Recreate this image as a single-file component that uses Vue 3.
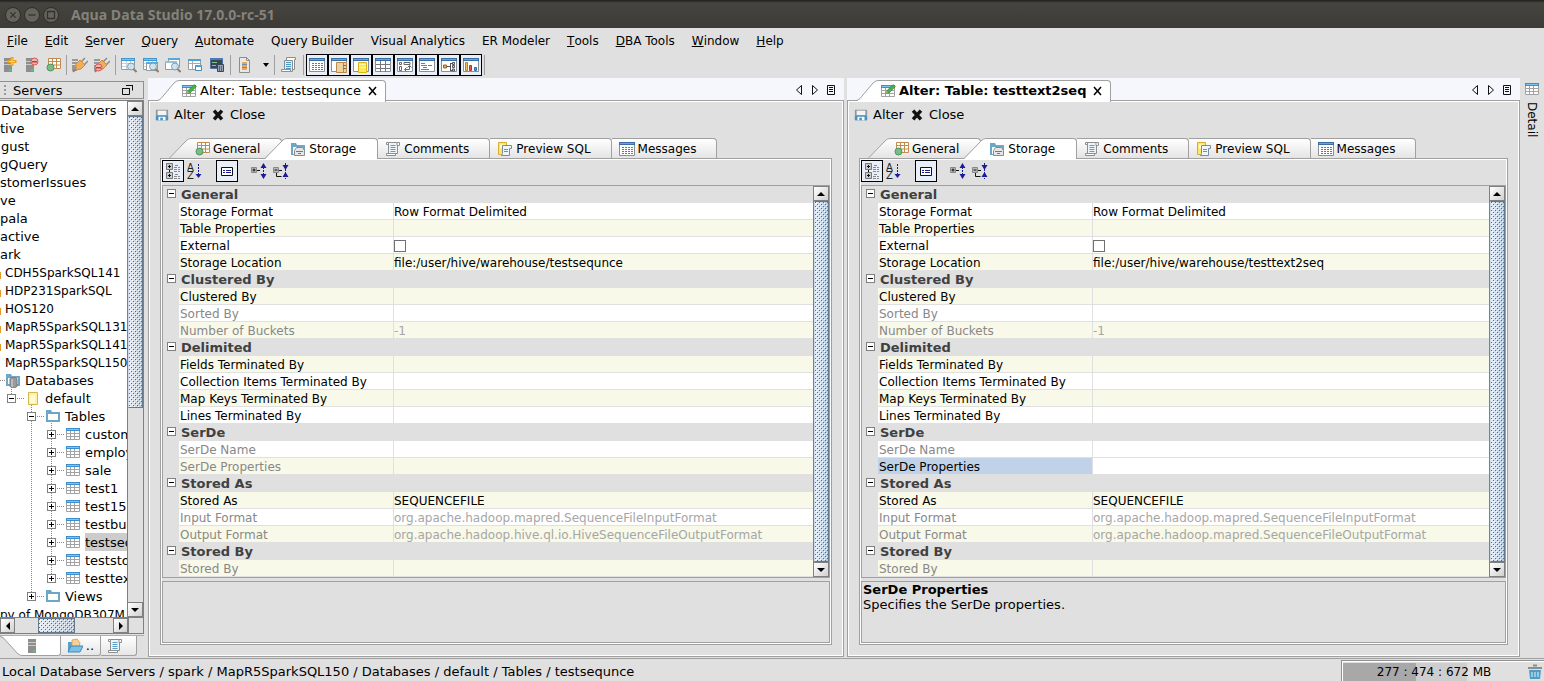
<script setup>
import { ref } from 'vue'

const menus = [
  ['F', 'ile'], ['E', 'dit'], ['S', 'erver'], ['Q', 'uery'], ['A', 'utomate'],
  ['', 'Query Builder'], ['', 'Visual Analytics'], ['', 'ER Modeler'],
  ['T', 'ools'], ['D', 'BA Tools'], ['W', 'indow'], ['H', 'elp']
]

const toolGroups = [
  ['server-add', 'server-remove', 'schema'],
  ['plug', 'plug-off'],
  ['win-search', 'win-search2', 'win-search3', 'win-copy', 'terminal']
]
const viewTools = ['v-text', 'v-form', 'v-db', 'v-grid', 'v-pivot', 'v-list', 'v-tree', 'v-chart']

const tree = [
  { t: 'Database Servers', x: 1 },
  { t: 'tive', x: 0 },
  { t: 'gust', x: 1 },
  { t: 'gQuery', x: 0 },
  { t: 'stomerIssues', x: 0 },
  { t: 've', x: 0 },
  { t: 'pala', x: 0 },
  { t: 'active', x: 0 },
  { t: 'ark', x: 0 },
  { t: 'CDH5SparkSQL141', x: 5, server: true, mark: true },
  { t: 'HDP231SparkSQL', x: 5, server: true, mark: true },
  { t: 'HOS120', x: 5, server: true, mark: true },
  { t: 'MapR5SparkSQL131', x: 5, server: true, mark: true },
  { t: 'MapR5SparkSQL141', x: 5, server: true, mark: true },
  { t: 'MapR5SparkSQL150', x: 5, server: true },
  { t: 'Databases', x: 25, icon: 'folder-db', from: 0, lines: [[11, 16, 18]] },
  { t: 'default', x: 45, icon: 'db', box: 11, sign: '-', lines: [[11, 0, 5], [31, 16, 18]] },
  { t: 'Tables', x: 65, icon: 'folder', box: 31, sign: '-', lines: [[31, 0, 18], [51, 16, 18]] },
  ...['customers', 'employee', 'sale', 'test1', 'test15', 'testbucket', 'testsequnce', 'teststore', 'testtext2seq'].map((t, i) => ({
    t, x: 85, icon: 'table', box: 51, sign: '+', selected: i === 6, lines: [[31, 0, 18], [51, 0, i === 8 ? 9 : 18]]
  })),
  { t: 'Views', x: 65, icon: 'folder', box: 31, sign: '+', lines: [[31, 0, 9]] },
  { t: 'py of MongoDB307M', x: 0, server: true }
]

const sections = (location, outputFormat) => [
  { title: 'General', rows: [
    { n: 'Storage Format', v: 'Row Format Delimited' },
    { n: 'Table Properties' },
    { n: 'External', check: true },
    { n: 'Storage Location', v: location }
  ] },
  { title: 'Clustered By', rows: [
    { n: 'Clustered By' },
    { n: 'Sorted By', off: true },
    { n: 'Number of Buckets', v: '-1', off: true }
  ] },
  { title: 'Delimited', rows: [
    { n: 'Fields Terminated By' },
    { n: 'Collection Items Terminated By' },
    { n: 'Map Keys Terminated By' },
    { n: 'Lines Terminated By' }
  ] },
  { title: 'SerDe', rows: [
    { n: 'SerDe Name', off: true },
    { n: 'SerDe Properties', off: true }
  ] },
  { title: 'Stored As', rows: [
    { n: 'Stored As', v: 'SEQUENCEFILE' },
    { n: 'Input Format', v: 'org.apache.hadoop.mapred.SequenceFileInputFormat', off: true },
    { n: 'Output Format', v: outputFormat, off: true }
  ] },
  { title: 'Stored By', rows: [{ n: 'Stored By', off: true }] }
]

const flatten = (list) => {
  const out = []
  list.forEach((s) => {
    out.push({ head: s.title })
    s.rows.forEach((r) => out.push({ ...r, even: out.length % 2 === 0 }))
  })
  return out
}

const panes = ref([
  {
    id: 'a', title: 'Alter: Table: testsequnce', bold: false, selected: '', help: '',
    rows: flatten(sections('file:/user/hive/warehouse/testsequnce', 'org.apache.hadoop.hive.ql.io.HiveSequenceFileOutputFormat'))
  },
  {
    id: 'b', title: 'Alter: Table: testtext2seq', bold: true, selected: 'SerDe Properties', help: 'Specifies the SerDe properties.',
    rows: flatten(sections('file:/user/hive/warehouse/testtext2seq', 'org.apache.hadoop.mapred.SequenceFileOutputFormat'))
  }
])

const innerTabs = [
  { t: 'General', icon: 'schema', slant: true },
  { t: 'Storage', icon: 'folder-disk', slant: true, active: true },
  { t: 'Comments', icon: 'scroll' },
  { t: 'Preview SQL', icon: 'preview' },
  { t: 'Messages', icon: 'v-text' }
]
const memory = { used: 277, allocated: 474, max: 672 }
</script>

<template>
  <div class="app">
    <svg class="sprite" aria-hidden="true">
      <defs>
        <symbol id="server" viewBox="0 0 16 16"><path d="M3 1h8v3H3zM3 5h8v2H3zM3 8h8v7H3z" fill="#8e8e8e" /><path d="M3 4h8v1H3zM3 7h8v1H3z" fill="#c9c9c9" /><path d="M8 12h2v2H8z" fill="#4fd06a" /></symbol>
        <symbol id="server-add" viewBox="0 0 16 16"><use href="#server" /><path d="M9.500 0h3v3h3v3h-3v3h-3V6h-3V3h3z" fill="#f0a020" /><path d="M10.500 1.500h1v6h-1zM8 4h6v1H8z" fill="#ffd84a" /></symbol>
        <symbol id="server-remove" viewBox="0 0 16 16"><use href="#server" /><circle cx="11.500" cy="4.500" r="3.500" fill="#f3b5b0" stroke="#d8574f" /><path d="M9 4h5v1.500H9z" fill="#c23a34" /></symbol>
        <symbol id="schema" viewBox="0 0 16 16"><path d="M3.500 1.500h12v10h-12zM3.500 4.500h12M3.500 8h12M7.500 1v10M11.500 1v10" fill="#fff" stroke="#c28a4e" /><circle cx="5.500" cy="10.500" r="3.500" fill="#7dbb84" stroke="#4c9460" /></symbol>
        <symbol id="plug" viewBox="0 0 16 16"><path d="M0 2h6v2H0zM0 5h6v2H0zM0 8h5v6H0z" fill="#999" /><path d="M1 15l3-3" stroke="#777" stroke-width="1.500" /><path d="M4 7l4-4 5 5-4 4-5 1z" fill="#f0ae5c" stroke="#d98a2e" /><path d="M9.500 4.500L13 1M12.500 7.500L16 4" stroke="#8a8a8a" stroke-width="1.500" /></symbol>
        <symbol id="plug-off" viewBox="0 0 16 16"><use href="#plug" /><circle cx="4.500" cy="10.500" r="3.500" fill="#f3b5b0" stroke="#d8574f" /><path d="M2 10h5v1.500H2z" fill="#c23a34" /></symbol>
        <symbol id="win" viewBox="0 0 16 16"><path d="M.5 1.500h13v11H.5z" fill="#fff" stroke="#9a9a9a" /><path d="M0 1h14v3H0z" fill="#3f97cf" /><path d="M1 2.500h12" stroke="#7fc4ee" /><path d="M1 6.500h12M1 9.500h12M5.500 4v8M9.500 4v8" stroke="#c5d3dc" /></symbol>
        <symbol id="lens" viewBox="0 0 16 16"><circle cx="10" cy="9.500" r="3.500" fill="#c5e2f3" fill-opacity=".9" stroke="#8c9aa2" /><path d="M12.500 12l3 3" stroke="#8c8073" stroke-width="2" /></symbol>
        <symbol id="win-search" viewBox="0 0 16 16"><use href="#win" /><use href="#lens" /></symbol>
        <symbol id="win-search2" viewBox="0 0 16 16"><use href="#win" /><path d="M3.500 5.500h11v8h-11z" fill="#fff" stroke="#999" /><path d="M3 5h12v2H3z" fill="#58aadc" /><use href="#lens" /></symbol>
        <symbol id="win-search3" viewBox="0 0 16 16"><path d="M3.500 1.500h11v9h-11z" fill="#fff" stroke="#999" /><path d="M3 1h12v2H3z" fill="#58aadc" /><path d="M.5 4.500h11v8H.5z" fill="#fff" stroke="#999" /><path d="M0 4h12v2H0z" fill="#9bbfd4" /><use href="#lens" /></symbol>
        <symbol id="win-copy" viewBox="0 0 16 16"><path d="M1.500 2.500h12v10h-12z" fill="#fff" stroke="#999" /><path d="M1 2h13v2H1z" fill="#4ba3d8" /><path d="M2 6.500h11M5.500 4v8" stroke="#aaa" /><path d="M8.500 8.500h6v5h-6z" fill="#fff" stroke="#4b86ac" /><path d="M8 8h7v2H8z" fill="#4ba3d8" /></symbol>
        <symbol id="terminal" viewBox="0 0 16 16"><path d="M1.500 1.500h12v10h-12z" fill="#3b4652" stroke="#5273a8" /><path d="M1 1h13v2H1z" fill="#4c7cb8" /><path d="M3 5.500h5M3 8.500h4" stroke="#7fc48a" /><path d="M8.500 7.500h6v7h-6z" fill="#98a1b3" stroke="#3c4560" /><path d="M10.500 9v5M12.500 9v5" stroke="#5a6480" /></symbol>
        <symbol id="doc" viewBox="0 0 16 16"><path d="M3.500.5h7l3 3v12h-10z" fill="#e8e8e8" stroke="#8d8d8d" /><path d="M10.500.5v3h3" fill="none" stroke="#8d8d8d" /><path d="M6 5h5v8H6z" fill="#e5a95a" /><path d="M6 7.500h5M6 10.500h5" stroke="#6d8fad" /></symbol>
        <symbol id="scroll" viewBox="0 0 16 16"><path d="M3.500 1.500h9v11h-9z" fill="#eef4f8" stroke="#8b8f92" /><path d="M1.500 12.500h9v2h-9zM12 1.500h2.500v3H12zM1.500 1.500h2v2h-2z" fill="#fff" stroke="#8b8f92" /><path d="M5.500 4.500h5M5.500 6.500h5M5.500 8.500h5M5.500 10.500h5" stroke="#56a0c9" /></symbol>
        <symbol id="scrolls" viewBox="0 0 16 16"><path d="M5.500.5h9v2h-1v10h-8z" fill="#fffce8" stroke="#8b8f92" /><path d="M3.500 3.500h8v11h-8z" fill="#d9edf8" stroke="#8b8f92" /><path d="M.5 12.500h9v2h-9z" fill="#fff" stroke="#8b8f92" /><path d="M5 5.500h5M5 7.500h5M5 9.500h5M5 11.500h5" stroke="#4b9bc9" /></symbol>
        <symbol id="preview" viewBox="0 0 16 16"><path d="M1.500 1.500h8v12h-8z" fill="#fbe56f" stroke="#d8b02c" /><path d="M3 3.500h5v4H3z" fill="#fffbd6" /><path d="M5.500 4.500h9v3h-2v7h-8l1-2z" fill="#eef6fb" stroke="#7b8c98" /><path d="M7 8.500h4M7 10.500h4" stroke="#4b9bc9" /></symbol>
        <symbol id="v-base" viewBox="0 0 16 16"><path d="M.5 1.500h15v13H.5z" fill="#fff" stroke="#8a8f94" /><path d="M0 1h16v3H0z" fill="#3b6ea5" /><path d="M1 2.500h14" stroke="#6ea3d6" /></symbol>
        <symbol id="v-text" viewBox="0 0 16 16"><use href="#v-base" /><path d="M3 6.500h11M3 8.500h11M3 10.500h11M3 12.500h11" stroke="#777" stroke-dasharray="2 1" /></symbol>
        <symbol id="v-form" viewBox="0 0 16 16"><use href="#v-base" /><path d="M5.500 5.500h10v10h-10zM12.500 5v10" fill="#efd2a4" stroke="#b98a4c" /><path d="M12 8.500h3M12 11.500h3" stroke="#8a6a40" /></symbol>
        <symbol id="v-db" viewBox="0 0 16 16"><use href="#v-base" /><path d="M5.500 5.500h8v10h-8z" fill="#fce95c" stroke="#dfb51c" /><path d="M6 7.500h7M6 10.500h7" stroke="#fff6b0" /></symbol>
        <symbol id="v-grid" viewBox="0 0 16 16"><use href="#v-base" /><path d="M1 7.500h14M1 11.500h14M5.500 4v11M10.500 4v11" stroke="#777" /></symbol>
        <symbol id="v-pivot" viewBox="0 0 16 16"><use href="#v-base" /><path d="M2.500 5.500h2v2h-2zM7 5.500h6v2H7zM2.500 9.500h2v4h-2zM8 12.500h4.500V9M10.500 10.500l2-2 2 2M9.500 10.500l-2 2 2 2" fill="none" stroke="#666" /></symbol>
        <symbol id="v-list" viewBox="0 0 16 16"><use href="#v-base" /><path d="M2 6.500h4M2 8.500h6M4 10.500h4M2 12.500h8M9 8.500h4" stroke="#6c8088" /></symbol>
        <symbol id="v-tree" viewBox="0 0 16 16"><use href="#v-base" /><path d="M5 9.500h4M9.500 6v8M9 6.500h2M9 13.500h2" stroke="#555" /><path d="M2.500 8h3v3h-3z" fill="#e6a24c" stroke="#9a6a2c" /><path d="M11.500 5.500h2v2h-2zM11.500 8.500h2v2h-2zM11.500 12h2v2h-2z" fill="#ddd" stroke="#555" /></symbol>
        <symbol id="v-chart" viewBox="0 0 16 16"><use href="#v-base" /><path d="M2.500 5.500h2v8h-2z" fill="#f7c24a" stroke="#b98322" /><path d="M6.500 8.500h2v5h-2z" fill="#e2574c" stroke="#a83a30" /><path d="M11.500 10.500h2v3h-2z" fill="#5a9bd5" stroke="#2f6ea8" /></symbol>
        <symbol id="folder" viewBox="0 0 16 16"><path d="M1 2h5l1 2h8v10H1z" fill="#6ea6c8" /><path d="M3 6h10v6H3z" fill="#fff" /></symbol>
        <symbol id="folder-db" viewBox="0 0 16 16"><path d="M1 2h5l1 2h8v10H1z" fill="#6ea6c8" /><path d="M3 6h10v6H3z" fill="#fff" /><path d="M5 7c0-2 7-2 7 0v7c0 2-7 2-7 0z" fill="#9b9b9b" stroke="#777" /><path d="M7 7v8" stroke="#ddd" /></symbol>
        <symbol id="folder-disk" viewBox="0 0 16 16"><path d="M1 2h5l1 2h8v10H1z" fill="#6ea6c8" /><path d="M3 6h10v7H3z" fill="#fff" /><path d="M4.500 9.500l2-3h6l2 3v5h-10z" fill="#e6e6e6" stroke="#8b8b8b" /><path d="M6 10.500h7M8 12.500h3" stroke="#777" /></symbol>
        <symbol id="folder-open" viewBox="0 0 16 16"><path d="M1 4h5l1 2h6v8H1z" fill="#5b9fc8" /><path d="M5 2l5-1 3 4-1 4H5z" fill="#f6d09c" stroke="#e0a95e" /><path d="M4 8h12l-3 6H1z" fill="#7cc0e6" stroke="#4089b6" /></symbol>
        <symbol id="db" viewBox="0 0 16 16"><path d="M3.500 2.500h9v12h-9z" fill="#fdf3a0" stroke="#d9b64a" /><path d="M5 5h5v8H5z" fill="#fffbd6" /></symbol>
        <symbol id="table" viewBox="0 0 16 16"><path d="M1.500 2.500h13v11h-13zM1 7.500h13M1 10.500h13M5.500 4v9M9.500 4v9" fill="#fff" stroke="#a2a2a2" /><path d="M1 2h14v3H1z" fill="#3d8fce" /><path d="M2 3.500h12" stroke="#7fc4ee" /></symbol>
        <symbol id="table-edit" viewBox="0 0 16 16"><use href="#table" /><path d="M6 10.500l1-3 6-6 2.500 2-6.500 6.500z" fill="#46b04a" stroke="#2d7f33" stroke-width=".5" /><path d="M6 10.500l1-2 1 1z" fill="#e8b87c" /></symbol>
        <symbol id="save" viewBox="0 0 16 16"><path d="M1 2h14v12H1z" fill="#8e979c" /><path d="M3 3h10v5H3z" fill="#f4f4f4" /><path d="M1 9h14v5H1z" fill="#4a93bf" /><path d="M4 10h8v4H4z" fill="#fff" /><path d="M6 11h3v3H6z" fill="#4a93bf" /></symbol>
        <symbol id="cross" viewBox="0 0 16 16"><path d="M3.500 3l9 10M12.500 3l-9 10" stroke="#111" stroke-width="4" /></symbol>
        <symbol id="trash" viewBox="0 0 16 16"><path d="M6 1.500h4M1 4h14" stroke="#8d8d8d" stroke-width="2" /><path d="M2 6h12l-1 9H3z" fill="#4e9dc6" /><path d="M5 8v5M8 8v5M11 8v5" stroke="#e8f4fb" /></symbol>
        <symbol id="p-cat" viewBox="0 0 16 16"><path d="M1.500.5h6v6h-6zM1.500 9.500h6v6h-6z" fill="#ccc" stroke="#777" /><path d="M3 3.500h3M4.500 2v3M3 12.500h3M4.500 11v3M4.500 7v2" stroke="#111" /><path d="M10 2.500h3M9 4.500h6M9 6.500h6M9 8.500h6M10 11.500h3M9 13.500h6M9 15.500h6" stroke="#888" stroke-dasharray="3 1" /></symbol>
        <symbol id="p-sort" viewBox="0 0 16 16"><text x="0" y="8" font-size="10" font-family="DejaVu Sans, sans-serif" fill="#222">A</text><text x="0" y="16" font-size="10" font-family="DejaVu Sans, sans-serif" fill="#222">Z</text><path d="M11.500 1v10" stroke="#1b1b8c" stroke-dasharray="2 1" /><path d="M8.500 11h6l-3 4z" fill="#1b1b9c" /></symbol>
        <symbol id="p-desc" viewBox="0 0 16 16"><path d="M2.500 4.500h11v8h-11z" fill="#fff" stroke="#111" /><path d="M4 7.500h2M7 7.500h5M4 9.500h2M7 9.500h5" stroke="#1b1b8c" /></symbol>
        <symbol id="p-expand" viewBox="0 0 16 16"><path d="M.5 4.500h5v5h-5z" fill="#bbb" stroke="#888" /><path d="M1.500 7h3M3 5.500v3M6 7.500h3" stroke="#111" /><path d="M12.500 4v8" stroke="#1b1b8c" stroke-dasharray="2 1" /><path d="M9.500 5h6l-3-5zM9.500 11h6l-3 5z" fill="#1b1b9c" /></symbol>
        <symbol id="p-collapse" viewBox="0 0 16 16"><path d="M.5 4.500h5v5h-5z" fill="#bbb" stroke="#888" /><path d="M1.500 7h3M6 7.500h3M3.500 10v3.500h5" stroke="#111" fill="none" /><path d="M12.500 0v16" stroke="#1b1b8c" stroke-dasharray="2 1" /><path d="M9.500 2h6l-3 5zM9.500 14h6l-3-5z" fill="#1b1b9c" /></symbol>
        <symbol id="left" viewBox="0 0 16 16"><path d="M10.500 3.500v9l-5-4.500z" fill="none" stroke="#111" /></symbol>
        <symbol id="right" viewBox="0 0 16 16"><path d="M5.500 3.500v9l5-4.500z" fill="none" stroke="#111" /></symbol>
        <symbol id="list" viewBox="0 0 16 16"><path d="M4.500 3.500h7v9h-7zM6 5.500h4M6 7.500h4M6 9.500h4" fill="none" stroke="#111" /></symbol>
        <symbol id="float" viewBox="0 0 16 16"><path d="M3.500 6.500h7v6h-7zM7 3.500h6.500v5" fill="none" stroke="#111" /><path d="M3 6h8v1H3zM7 3h7v1H7z" fill="#111" /></symbol>
      </defs>
    </svg>

    <header class="titlebar">
      <button class="dot" aria-label="Close window"><svg viewBox="0 0 16 16"><path d="M5 5l6 6M11 5l-6 6" /></svg></button>
      <button class="dot" aria-label="Minimize"><svg viewBox="0 0 16 16"><path d="M4 8h8" /></svg></button>
      <button class="dot" aria-label="Maximize"><svg viewBox="0 0 16 16"><path d="M4 4h8v8H4z" /></svg></button>
      <h1>Aqua Data Studio 17.0.0-rc-51</h1>
    </header>

    <nav class="menubar">
      <button v-for="m in menus" :key="m[1]"><u>{{ m[0] }}</u>{{ m[1] }}</button>
    </nav>

    <div class="toolbar">
      <template v-for="(g, i) in toolGroups" :key="i">
        <button v-for="t in g" :key="t" class="tool" :aria-label="t"><svg class="ic"><use :href="'#' + t" /></svg></button>
        <span class="sep"></span>
      </template>
      <button class="tool" aria-label="New document"><svg class="ic"><use href="#doc" /></svg></button>
      <button class="drop" aria-label="Document menu"><svg viewBox="0 0 8 5"><path d="M1 0h6L4 4z" /></svg></button>
      <span class="sep"></span>
      <button class="tool wide" aria-label="Scripts"><svg class="ic"><use href="#scrolls" /></svg></button>
      <span class="sep"></span>
      <button v-for="t in viewTools" :key="t" class="tool on" :aria-label="t"><svg class="ic"><use :href="'#' + t" /></svg></button>
      <span class="sep"></span>
    </div>

    <main class="main">
      <aside class="side">
        <div class="side-head">
          <i class="grip"></i><span>Servers</span>
          <button aria-label="Float"><svg class="ic"><use href="#float" /></svg></button>
        </div>
        <div class="tree-box">
          <div class="tree-row">
            <ul class="tree">
              <li v-for="(r, i) in tree" :key="i">
                <svg class="lead" :width="r.x" height="18">
                  <rect v-if="r.mark" x="0" y="9" width="1" height="7" fill="#e09a2c" />
                  <path v-for="(l, k) in r.lines || []" :key="k" :d="`M${l[0]}.5 ${l[1]}V${l[2]}`" class="dotted" />
                  <path v-if="r.icon" :d="`M${r.box || 0} 9.5H${r.x - 20}`" class="dotted" />
                  <g v-if="r.box">
                    <rect :x="r.box - 3.5" y="5.500" width="8" height="8" fill="#fff" stroke="#808080" />
                    <path :d="`M${r.box - 2} 9.5h5` + (r.sign === '+' ? `M${r.box}.5 7v5` : '')" stroke="#000" />
                  </g>
                  <use v-if="r.icon" :href="'#' + r.icon" :x="r.x - 20" y="1" width="16" height="16" />
                </svg>
                <span :class="{ sel: r.selected, server: r.server }">{{ r.t }}</span>
              </li>
            </ul>
            <div class="vbar">
              <button aria-label="Scroll up"><svg viewBox="0 0 8 4"><path d="M0 4l4-4 4 4z" /></svg></button>
              <div class="thumb part"></div>
              <div class="track"></div>
              <button aria-label="Scroll down"><svg viewBox="0 0 8 4"><path d="M0 0h8L4 4z" /></svg></button>
            </div>
          </div>
          <div class="hbar">
            <button aria-label="Scroll left"><svg viewBox="0 0 4 8" class="tall"><path d="M4 0v8L0 4z" /></svg></button>
            <div class="track before"></div>
            <div class="thumb"></div>
            <div class="track"></div>
            <button aria-label="Scroll right"><svg viewBox="0 0 4 8" class="tall"><path d="M0 0v8l4-4z" /></svg></button>
            <div class="corner"></div>
          </div>
        </div>
        <div class="side-tabs">
          <svg class="side-slant" viewBox="0 0 22 20"><path d="M0 0h22v20q-2 0-4-2L4 2Q2 0 0 0z" fill="#fff" /><path d="M0 .5q2 0 4 2L18 18q2 1.500 4 1.500" fill="none" stroke="#a0a0a0" /></svg>
          <button class="on" aria-label="Servers"><svg class="ic"><use href="#server" /></svg></button>
          <button class="files" aria-label="Files"><svg class="ic"><use href="#folder-open" /></svg><span>..</span></button>
          <button class="scripts" aria-label="Scripts"><svg class="ic"><use href="#scroll" /></svg></button>
        </div>
      </aside>

      <section v-for="p in panes" :key="p.id" class="pane" :class="'pane-' + p.id">
        <div class="strip">
          <div class="doc-tab">
            <svg class="slant" viewBox="0 0 22 22"><path d="M0 22L18 3q3-3 4-3v22z" fill="#fff" /><path d="M0 20.500q2 0 4-2L17 3q2.500-2.500 5-2.500" fill="none" stroke="#a0a0a0" /></svg>
            <div class="doc-body">
              <svg class="ic"><use href="#table-edit" /></svg>
              <span :class="{ bold: p.bold }">{{ p.title }}</span>
              <button aria-label="Close tab"><svg viewBox="0 0 10 10"><path d="M1 1l7 8M8 1L1 9" stroke="#000" stroke-width="1.500" /></svg></button>
            </div>
          </div>
          <div class="nav">
            <button v-for="n in ['left', 'right', 'list']" :key="n" :aria-label="n"><svg class="ic"><use :href="'#' + n" /></svg></button>
          </div>
        </div>

        <div class="content">
          <div class="actions">
            <button><svg><use href="#save" /></svg>Alter</button>
            <button><svg><use href="#cross" /></svg>Close</button>
          </div>
          <div class="tabs" role="tablist">
            <div v-for="t in innerTabs" :key="t.t" class="tab" :class="{ active: t.active, slanted: t.slant }">
              <svg v-if="t.slant" class="slant" viewBox="0 0 22 21">
                <defs><linearGradient :id="'g' + p.id + t.t" x1="0" x2="0" y1="0" y2="1"><stop offset="0" stop-color="#fff" /><stop offset="1" stop-color="#e4e4e4" /></linearGradient></defs>
                <path v-if="t.active" d="M0 21L17 3q2-3 5-3v21z" fill="#fff" />
                <path v-else d="M0 20L17 3q2-3 5-3v20z" :fill="`url(#g${p.id}${t.t})`" />
                <path d="M0 20.500L17 3q2-2.500 5-2.500" fill="none" stroke="#a0a0a0" />
              </svg>
              <button role="tab" :aria-selected="!!t.active"><svg class="ic"><use :href="'#' + t.icon" /></svg>{{ t.t }}</button>
            </div>
          </div>
          <div class="panel">
            <div class="ptools">
              <button class="on" aria-label="Categorized"><svg class="ic"><use href="#p-cat" /></svg></button>
              <button aria-label="Sort"><svg class="ic"><use href="#p-sort" /></svg></button>
              <i></i>
              <button class="on" aria-label="Show description"><svg class="ic"><use href="#p-desc" /></svg></button>
              <i></i>
              <button aria-label="Expand all"><svg class="ic"><use href="#p-expand" /></svg></button>
              <button aria-label="Collapse all"><svg class="ic"><use href="#p-collapse" /></svg></button>
            </div>
            <div class="grid-box">
              <table>
                <colgroup><col class="c-gut"><col class="c-name"><col></colgroup>
                <tbody>
                  <tr v-for="(r, i) in p.rows" :key="i" :class="{ even: r.even, off: r.off && p.selected !== r.n, cur: p.selected && p.selected === r.n }">
                    <template v-if="r.head">
                      <td class="gut"><button class="fold" aria-label="Collapse"></button></td>
                      <th colspan="2">{{ r.head }}</th>
                    </template>
                    <template v-else>
                      <td class="gut"></td>
                      <td class="name">{{ r.n }}</td>
                      <td class="val"><input v-if="r.check" type="checkbox" :aria-label="r.n"><template v-else>{{ r.v }}</template></td>
                    </template>
                  </tr>
                </tbody>
              </table>
              <div class="vbar">
                <button aria-label="Scroll up"><svg viewBox="0 0 8 4"><path d="M0 4l4-4 4 4z" /></svg></button>
                <div class="thumb"></div>
                <button aria-label="Scroll down"><svg viewBox="0 0 8 4"><path d="M0 0h8L4 4z" /></svg></button>
              </div>
            </div>
            <div class="help"><b>{{ p.selected }}</b><p>{{ p.help }}</p></div>
          </div>
        </div>
      </section>

      <aside class="dock">
        <button><svg class="ic"><use href="#table" /></svg><span>Detail</span></button>
      </aside>
    </main>

    <footer class="status">
      <span class="path">Local Database Servers / spark / MapR5SparkSQL150 / Databases / default / Tables / testsequnce</span>
      <div class="mem">
        <div class="mem-bar">
          <div class="mem-alloc" :style="{ width: (memory.allocated / memory.max) * 100 + '%' }"></div>
          <div class="mem-used" :style="{ width: (memory.used / memory.max) * 100 + '%' }"></div>
          <span>{{ memory.used }} : {{ memory.allocated }} : {{ memory.max }} MB</span>
        </div>
        <button aria-label="Collect garbage"><svg class="ic"><use href="#trash" /></svg></button>
      </div>
    </footer>
  </div>
</template>

<style>
body { margin: 0; background: #e0e0e0; }
</style>

<style scoped>
* { box-sizing: border-box; }
.app { display: flex; flex-direction: column; height: 100vh; overflow: hidden; background: #e0e0e0; color: #000; font: 13px/16px "DejaVu Sans", sans-serif; white-space: nowrap; }
button { margin: 0; padding: 0; border: 0; background: none; font: inherit; color: inherit; display: flex; align-items: center; justify-content: center; flex: none; }
svg { display: block; flex: none; }
.sprite { position: absolute; width: 0; height: 0; }
.ic { width: 16px; height: 16px; }

.titlebar { height: 28px; flex: none; display: flex; align-items: center; gap: 3px; padding: 2px 5px 0; background: linear-gradient(#1e1e1b, #45443f 3px, #3c3b37); }
.titlebar h1 { margin: 0 0 0 9px; font: bold 14px/20px "Open Sans", sans-serif; color: #85827a; }
.dot { width: 16px; height: 16px; border-radius: 50%; background: #66635c; border: 1px solid #2e2d29; }
.dot svg { width: 14px; height: 14px; }
.dot path { fill: none; stroke: #33322e; stroke-width: 1.500; }

.menubar { display: flex; flex: none; height: 26px; align-items: center; gap: 17px; padding: 0 7px; font-size: 12px; }
.toolbar { display: flex; flex: none; height: 24px; align-items: flex-start; margin-left: -2px; }
.tool { width: 22px; height: 22px; }
.tool.wide { width: 24px; }
.tool.on { border: 1px solid #000; background: #e9eff8; }
.sep { width: 1px; height: 20px; margin: 1px 2px; background: #a0a0a0; flex: none; }
.drop { width: 17px; height: 22px; padding-left: 4px; }
.drop svg { width: 8px; height: 5px; }

.main { display: flex; flex: 1; min-height: 0; }
.side { width: 145px; flex: none; display: flex; flex-direction: column; padding: 3px 1px 2px 0; margin-right: 3px; }
.side-head { display: flex; flex: none; align-items: center; height: 18px; border: 1px solid #909090; border-left: 0; padding: 0 8px 0 4px; }
.side-head span { flex: 1; padding-top: 2px; }
.grip { width: 2px; height: 11px; margin-right: 7px; background: repeating-linear-gradient(#999 0 2px, transparent 2px 4px); }
.tree-box { display: flex; flex-direction: column; flex: 1; min-height: 0; margin-top: 1px; border: 1px solid #808080; border-left: 0; }
.tree-row { display: flex; flex: 1; min-height: 0; background: #fff; }
.tree { list-style: none; margin: 0; padding: 0; flex: 1; min-width: 0; overflow: hidden; }
.tree li { display: flex; height: 18px; line-height: 18px; }
.tree span { height: 18px; padding-top: 1px; }
.tree .sel { background: #ccc; }
.tree .server { font-size: 12px; }
.dotted { fill: none; stroke: #888; stroke-dasharray: 1 1; }

.vbar { width: 16px; flex: none; display: flex; flex-direction: column; border-left: 1px solid #808080; background: #e0e0e0; }
.vbar button, .hbar button { width: 15px; height: 15px; border: 1px solid #808080; background: linear-gradient(135deg, #fff, #d0d0d0); }
.vbar button { width: 100%; border-left: 0; }
.vbar svg { width: 8px; height: 4px; }
svg.tall { width: 4px; height: 8px; }
.thumb {
  flex: 1;
  border: 1px solid #65788c;
  background:
    conic-gradient(at 1px 1px, transparent 75%, #fff 0) 1px 1px / 4px 4px,
    conic-gradient(at 1px 1px, transparent 75%, #fff 0) 3px 3px / 4px 4px,
    conic-gradient(at 1px 1px, transparent 75%, #5a6b7e 0) 2px 2px / 4px 4px,
    conic-gradient(at 1px 1px, transparent 75%, #5a6b7e 0) 0 0 / 4px 4px,
    linear-gradient(90deg, #e4edf7, #b4c9de);
}
.vbar .thumb { border-left-color: #cfdbe8; }
.thumb.part { flex: 291; }
.track { flex: 195; background: #e0e0e0; }
.hbar { display: flex; flex: none; height: 16px; border-top: 1px solid #808080; background: #e0e0e0; }
.hbar .thumb { flex: 36; }
.hbar .track { flex: 38; }
.hbar .before { flex: 23; }
.corner { width: 15px; border-left: 1px solid #808080; }
.side-tabs { display: flex; flex: none; height: 21px; margin-top: 1px; border-top: 1px solid #b0b0b0; }
.side-slant { width: 22px; height: 20px; }
.side-tabs button { width: 36px; border: solid #a0a0a0; border-width: 0 1px 1px 0; border-radius: 0 0 3px 0; background: linear-gradient(#fff, #e6e6e6); }
.side-tabs .on { width: 39px; background: #fff; padding-right: 16px; }
.side-tabs .files { width: 40px; gap: 3px; }
.side-tabs .scripts { padding-right: 8px; }

.pane { display: flex; flex-direction: column; min-width: 0; }
.pane-a { flex: 696; margin-right: 3px; }
.pane-b { flex: 673; }
.strip { display: flex; justify-content: space-between; height: 23px; flex: none; padding: 2px 5px 0 9px; background: #f5f7fc; position: relative; z-index: 1; border-bottom: 1px solid #a0a0a0; }
.doc-tab { display: flex; height: 22px; margin-bottom: -2px; }
.slant { width: 22px; height: 22px; }
.doc-body { display: flex; align-items: center; background: #fff; border: solid #a0a0a0; border-width: 1px 1px 0 0; border-radius: 0 4px 0 0; padding: 0 7px 2px 2px; }
.doc-body span { margin: 0 7px 0 3px; }
.doc-body button svg { width: 10px; height: 10px; }
.bold { font-weight: bold; }
.nav { display: flex; align-items: center; }
.content { flex: 1; min-height: 0; display: flex; flex-direction: column; border: 1px solid #a0a0a0; border-top: 0; box-shadow: inset 0 0 0 1px #fff; padding: 4px 11px 11px; margin-bottom: 1px; }
.actions { display: flex; gap: 6px; height: 20px; flex: none; margin: 0 0 13px -5px; }
.actions svg { width: 14px; height: 14px; }
.actions button { gap: 5px; }

.tabs { display: flex; flex: none; height: 21px; margin-bottom: -1px; padding-left: 9px; position: relative; z-index: 1; font-size: 12px; }
.tab { display: flex; height: 20px; }
.tab button { height: 20px; gap: 3px; padding: 0 20px 0 7px; border: solid #a0a0a0; border-width: 1px 1px 0 0; border-radius: 0 4px 0 0; background: linear-gradient(#fff, #e4e4e4); }
.tab .slant { height: 21px; }
.tab.slanted button { padding: 0 21px 0 3px; }
.tab.active { margin-left: -17px; height: 21px; }
.active button { background: #fff; height: 21px; }
.panel { flex: 1; min-height: 0; display: flex; flex-direction: column; border: 1px solid #a0a0a0; box-shadow: inset 0 0 0 1px #fff; padding: 1px; }
.ptools { display: flex; flex: none; height: 25px; }
.ptools button { width: 22px; height: 22px; }
.ptools .on { border: 1px solid #000; background: #e9eff8; }
.ptools i { width: 10px; }
.grid-box { display: flex; flex: none; border: 1px solid #a0a0a0; }
table { flex: 1; min-width: 0; width: 100%; table-layout: fixed; border-collapse: separate; border-spacing: 0; }
.c-gut { width: 16px; }
.c-name { width: 215px; }
td, th { height: 17px; padding: 2px 0 0 1px; line-height: 14px; text-align: left; overflow: hidden; border-bottom: 1px solid #e0e0e0; background: #fff; }
td { font-size: 12px; }
th { color: #404040; padding-left: 2px; }
td.gut, th { background: #e0e0e0; }
td.gut { padding: 0 0 1px 4px; }
.name { border-right: 1px solid #e0e0e0; }
td.val { padding-left: 0; }
.even .name, .even .val { background: #f8f9e8; }
.off .name { color: #888; }
.off .val { color: #a6a6a6; }
.cur .name { background: #c0d2e8; }
.cur .val { background: #fff; }
.fold { width: 9px; height: 9px; border: 1px solid #808080; background: linear-gradient(#000, #000) center / 5px 1px no-repeat #fff; }
input[type=checkbox] { appearance: none; display: block; width: 12px; height: 12px; margin: 0; border: 1px solid #707070; background: #fff; }
.help { flex: 1; min-height: 0; margin-top: 3px; border: 1px solid #a0a0a0; padding: 0 1px; line-height: 15px; }
.help p { margin: 0; }

.dock { width: 24px; flex: none; padding-top: 3px; font-size: 12px; }
.dock button { width: 24px; flex-direction: column; gap: 5px; }
.dock span { writing-mode: vertical-rl; }

.status { display: flex; flex: none; height: 23px; border-top: 1px solid #a0a0a0; justify-content: space-between; align-items: center; padding-left: 2px; }
.path { padding-top: 3px; }
.mem { display: flex; width: 203px; height: 21px; margin-top: 1px; border: solid #909090; border-width: 1px 0 0 1px; box-shadow: inset 1px 1px 0 #fff; padding: 2px 1px 0; }
.mem-bar { flex: 1; position: relative; display: flex; align-items: center; justify-content: center; padding-left: 6px; font-size: 12px; }
.mem-alloc, .mem-used { position: absolute; left: 0; top: 0; bottom: 0; background: #cecece; }
.mem-used { background: #a8a8a8; }
.mem-bar span { position: relative; }
.mem button { width: 24px; justify-content: flex-end; }
</style>
